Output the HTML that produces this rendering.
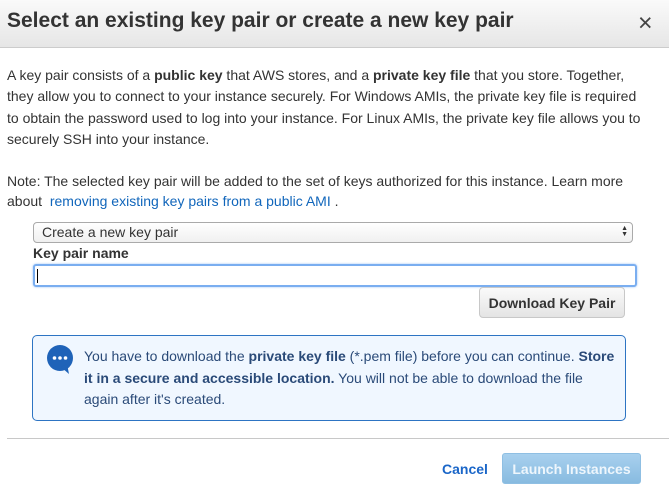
<!DOCTYPE html>
<html><head><style>
body{margin:0;width:669px;height:484px;overflow:hidden;background:#fff;font-family:"Liberation Sans",Arial,sans-serif;color:#333;position:relative}
.hd{position:absolute;left:0;top:0;width:669px;height:47px;background:linear-gradient(#fafafa,#e6e6e6);border-bottom:1px solid #ccc}
.hd h1{position:absolute;left:7px;top:9px;margin:0;font-size:21px;font-weight:bold;color:#333;letter-spacing:0}
.x{position:absolute;left:638px;top:9px;font-size:25px;color:#444}
.p{position:absolute;left:7px;font-size:14px;line-height:21.3px;width:662px;white-space:nowrap}
a{color:#1166bb;text-decoration:none}
.sel{position:absolute;left:33px;top:222px;height:19px;border:1px solid #aaa;border-radius:4px;background:linear-gradient(#fff,#f0f0f0);font-size:14px;line-height:19px;padding-left:8px;width:590px}
.arr{position:absolute;right:4px;top:3px;font-size:7px;line-height:6px;color:#333}
.lab{position:absolute;left:33px;top:245px;font-size:14px;font-weight:bold}
.inp{position:absolute;left:33px;top:264px;width:600px;height:19px;border:2px solid #7aaef0;border-radius:3px;box-shadow:0 0 2px #9cc3f5}
.cur{position:absolute;left:2px;top:3px;width:1px;height:14px;background:#000}
.btn{position:absolute;left:479px;top:287px;width:146px;height:31px;border:1px solid #c8c8c8;border-radius:4px;background:linear-gradient(#fafafa,#e4e4e4);font-size:14px;font-weight:bold;text-align:center;line-height:31px;color:#333;box-sizing:border-box}
.info{position:absolute;left:32px;top:335px;width:594px;height:86px;border:1px solid #2d74c3;border-radius:5px;background:#f0f7ff;box-sizing:border-box}
.info .t{position:absolute;left:51px;top:10px;font-size:14px;line-height:21.5px;color:#2a4a78;white-space:nowrap}
.hr{position:absolute;left:7px;top:438px;width:662px;height:1px;background:#c8c8c8}
.cancel{position:absolute;left:442px;top:461px;font-size:14px;font-weight:bold;color:#1a66c8}
.launch{position:absolute;left:502px;top:453px;width:139px;height:31px;border-radius:3px;background:linear-gradient(#a8d0ee,#88bbe0);color:#eef6fc;font-size:14px;font-weight:bold;text-align:center;line-height:31px;border:1px solid #8fbfe3;box-sizing:border-box}
</style></head><body>
<div class="hd"><h1>Select an existing key pair or create a new key pair</h1><div class="x">×</div></div>
<div class="p" style="top:65px">A key pair consists of a <b>public key</b> that AWS stores, and a <b>private key file</b> that you store. Together,<br>they allow you to connect to your instance securely. For Windows AMIs, the private key file is required<br>to obtain the password used to log into your instance. For Linux AMIs, the private key file allows you to<br>securely SSH into your instance.</div>
<div class="p" style="top:171px;line-height:20px">Note: The selected key pair will be added to the set of keys authorized for this instance. Learn more<br>about &nbsp;<a>removing existing key pairs from a public AMI</a> .</div>
<div class="sel">Create a new key pair<div class="arr">▲<br>▼</div></div>
<div class="lab">Key pair name</div>
<div class="inp"><div class="cur"></div></div>
<div class="btn">Download Key Pair</div>
<div class="info">
<svg style="position:absolute;left:12px;top:9px" width="30" height="30" viewBox="0 0 30 30"><circle cx="15" cy="13" r="13" fill="#1f63b8"/><path d="M16 22 L24 29 L22 19 Z" fill="#1f63b8"/><circle cx="9.5" cy="13" r="1.8" fill="#fff"/><circle cx="15" cy="13" r="1.8" fill="#fff"/><circle cx="20.5" cy="13" r="1.8" fill="#fff"/></svg>
<div class="t">You have to download the <b>private key file</b> (*.pem file) before you can continue. <b>Store</b><br><b>it in a secure and accessible location.</b> You will not be able to download the file<br>again after it's created.</div></div>
<div class="hr"></div>
<div class="cancel">Cancel</div>
<div class="launch">Launch Instances</div>
</body></html>
